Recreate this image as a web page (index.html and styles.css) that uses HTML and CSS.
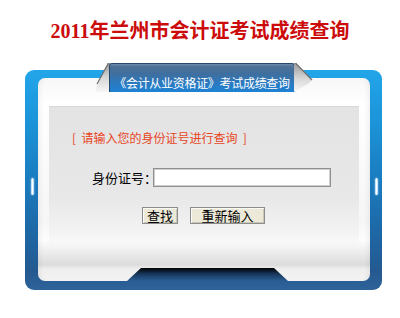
FILE: index.html
```html
<!DOCTYPE html>
<html lang="zh-CN">
<head>
<meta charset="utf-8">
<title>2011年兰州市会计证考试成绩查询</title>
<link rel="stylesheet" href="styles.css">
</head>
<body>
<h1 class="title">2011年兰州市会计证考试成绩查询</h1>
<div class="frame">
  <div class="panel">
    <div class="content">
      <p class="hint">[&nbsp;&nbsp;请输入您的身份证号进行查询&nbsp;&nbsp;]</p>
      <div class="row">
        <label class="label" for="sfz">身份证号：</label>
        <input class="idinput" id="sfz" type="text">
      </div>
      <div class="actions">
        <button class="btn btn-search" type="button">查找</button>
        <button class="btn btn-reset" type="reset">重新输入</button>
      </div>
    </div>
    <svg class="notch" width="161" height="13" viewBox="0 0 161 13">
      <defs>
        <linearGradient id="ng" x1="0" y1="0" x2="0" y2="1">
          <stop offset="0" stop-color="#000"/>
          <stop offset="0.45" stop-color="#17365a"/>
          <stop offset="1" stop-color="#2b5e94"/>
        </linearGradient>
      </defs>
      <polygon points="14,0 147,0 161,13 0,13" fill="url(#ng)"/>
    </svg>
  </div>
  <svg class="fold fold-left" width="16" height="29" viewBox="0 0 16 29">
    <defs>
      <linearGradient id="fl" x1="0" y1="0" x2="0" y2="1">
        <stop offset="0" stop-color="#9a9a9a"/>
        <stop offset="0.5" stop-color="#d6d6d6"/>
        <stop offset="1" stop-color="#f6f6f6"/>
      </linearGradient>
    </defs>
    <polygon points="14,0 16,0 16,29 1,29 3,22" fill="url(#fl)"/>
    <line x1="14.5" y1="0" x2="3" y2="21" stroke="#6e6e6e" stroke-width="1.2"/>
  </svg>
  <div class="tab">《会计从业资格证》考试成绩查询</div>
  <svg class="fold fold-right" width="20" height="29" viewBox="0 0 20 29">
    <defs>
      <linearGradient id="fr" x1="0" y1="0" x2="0" y2="1">
        <stop offset="0" stop-color="#9a9a9a"/>
        <stop offset="0.55" stop-color="#d8d8d8"/>
        <stop offset="1" stop-color="#f6f6f6"/>
      </linearGradient>
    </defs>
    <polygon points="0,0 2,0 18,17 14,21 0,29" fill="url(#fr)"/>
    <line x1="1.5" y1="0" x2="18" y2="17" stroke="#6e6e6e" stroke-width="1.2"/>
  </svg>
  <span class="handle handle-left"></span>
  <span class="handle handle-right"></span>
</div>
</body>
</html>
```

FILE: styles.css
```css
body {
  margin: 0;
  background: #fff;
  font-family: "Noto Sans CJK SC", sans-serif;
}

.title {
  margin: 0;
  padding-top: 19px;
  height: 24px;
  line-height: 24px;
  text-align: center;
  font-family: "Liberation Serif", "Noto Sans CJK SC", serif;
  font-size: 20px;
  font-weight: bold;
  color: #cc0b0b;
}

.frame {
  position: relative;
  width: 357px;
  height: 220px;
  margin: 27px 0 0 25px;
  box-sizing: border-box;
  padding: 8px 12px 9px 13px;
  border-radius: 9px;
  background: linear-gradient(to bottom,
    #23a5ea 0%,
    #1c95da 22%,
    #1a7cbf 50%,
    #1e66a4 75%,
    #25598f 92%,
    #2e6399 100%);
}

.panel {
  position: relative;
  height: 203px;
  box-sizing: border-box;
  padding: 28px 11px 0 11px;
  border-radius: 7px;
  background: linear-gradient(to bottom,
    #f7f7f7 0%,
    #ffffff 12%,
    #f6f6f6 70%,
    #fdfdfd 80%,
    #ececec 86%,
    #dcdcdc 92%,
    #eeeeee 94%,
    #f3f3f3 100%);
  box-shadow: inset 6px 0 6px -5px rgba(0, 0, 0, 0.08), inset -6px 0 6px -5px rgba(0, 0, 0, 0.08);
}

.content {
  height: 150px;
  box-sizing: border-box;
  border-top: 1px solid #d9d9d9;
  padding: 23px 0 0 23px;
  background: linear-gradient(to bottom,
    #e3e3e3 0%,
    #e8e8e8 60%,
    #f1f1f1 80%,
    rgba(250, 250, 250, 0) 96%);
}

.hint {
  margin: 0;
  font-size: 12px;
  line-height: 16px;
  color: #e8441c;
  white-space: nowrap;
}

.row {
  display: flex;
  align-items: center;
  margin-top: 22px;
  padding-left: 20px;
}

.label {
  font-size: 13px;
  line-height: 19px;
  color: #000;
  margin-right: -4px;
  white-space: nowrap;
}

.idinput {
  width: 178px;
  height: 19px;
  box-sizing: border-box;
  margin: 0;
  padding: 0 2px;
  border: 1px solid #8f8f8f;
  box-shadow: inset 0 0 0 1px #cfcfcf;
  background: #fff;
  font-size: 12px;
}

.actions {
  display: flex;
  gap: 12px;
  margin-top: 20px;
  padding-left: 70px;
}

.btn {
  height: 17px;
  box-sizing: border-box;
  margin: 0;
  padding: 0;
  border: 1px solid #8d8d8d;
  box-shadow: inset 1px 1px 0 #fbfaf4, inset -1px -1px 0 #cbc7b6;
  background: #ece9d8;
  font-family: "Noto Sans CJK SC", sans-serif;
  font-size: 13px;
  line-height: 15px;
  color: #000;
}

.btn-search {
  width: 36px;
}

.btn-reset {
  width: 75px;
}

.notch {
  position: absolute;
  left: 89px;
  bottom: 0;
  display: block;
}

.tab {
  position: absolute;
  left: 84px;
  top: -7px;
  width: 186px;
  height: 29px;
  box-sizing: border-box;
  padding-top: 11px;
  border: 1px solid #27496b;
  border-bottom: none;
  border-radius: 3px 3px 0 0;
  background: linear-gradient(to bottom,
    #6c8bad 0%,
    #4d6f96 10%,
    #3f6f9f 35%,
    #2c78bd 65%,
    #1d82d4 100%);
  color: #fff;
  font-size: 12px;
  line-height: 16px;
  text-align: center;
  white-space: nowrap;
  letter-spacing: -0.3px;
}

.fold {
  position: absolute;
  top: -7px;
  display: block;
}

.fold-left {
  left: 69px;
}

.fold-right {
  left: 269px;
}

.handle {
  position: absolute;
  top: 108px;
  width: 3px;
  height: 17px;
  border-radius: 2px;
  background: linear-gradient(to right, #a8d2f2, #ffffff, #a8d2f2);
  box-shadow: 0 0 2px rgba(200, 230, 255, 0.8);
}

.handle-left {
  left: 6px;
}

.handle-right {
  left: 350px;
}
```
